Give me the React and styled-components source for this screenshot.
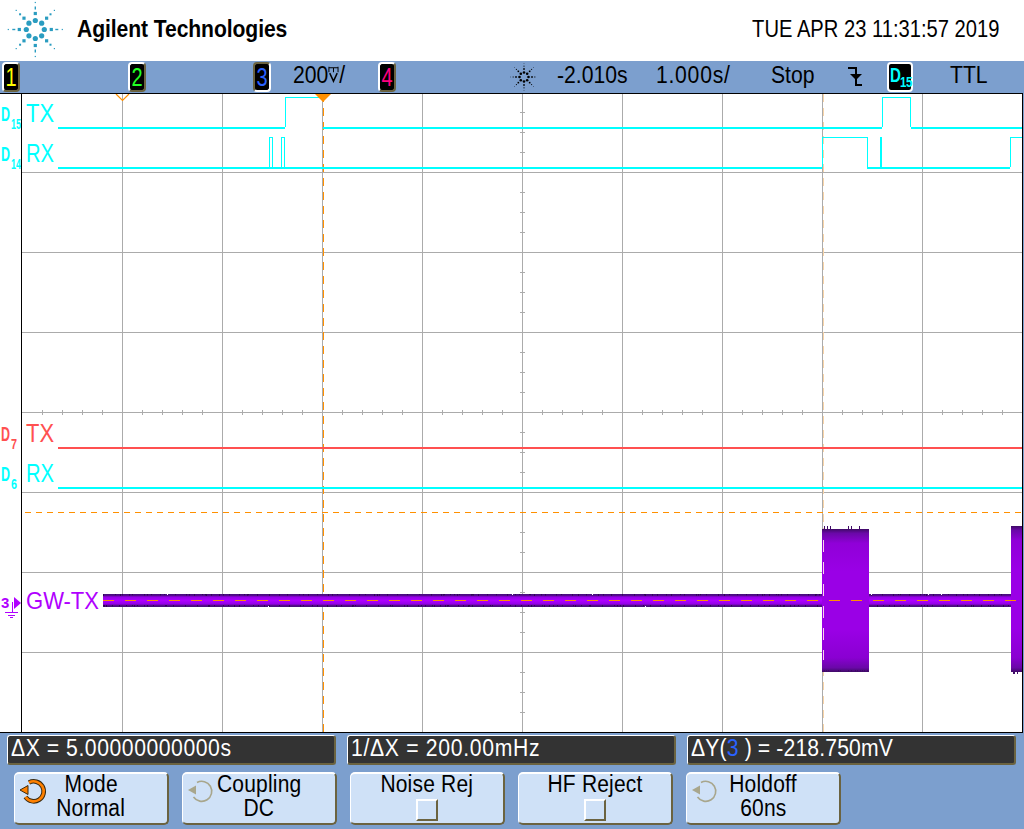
import React from "react";
import styled, { createGlobalStyle } from "styled-components";

const GlobalStyle = createGlobalStyle`
  html, body { margin: 0; padding: 0; background: #7c9fce; }
  body { font-family: "Liberation Sans", Arial, sans-serif; }
`;

const Page = styled.div`
  width: 1024px;
  height: 829px;
  display: flex;
  flex-direction: column;
  overflow: hidden;
  background: #7c9fce;
  color: #000;
`;

const Header = styled.header`
  height: 61px;
  flex: none;
  background: #fff;
  display: flex;
  align-items: center;
  padding: 0 25px 0 5px;
`;

const Brand = styled.div`
  margin: 0 0 3px 8px;
  font-size: 24px;
  font-weight: 700;
  letter-spacing: -0.1px;
  transform: scaleX(0.88);
  transform-origin: left center;
`;

const Clock = styled.div`
  margin: 0 0 3px auto;
  font-size: 24px;
  transform: scaleX(0.84);
  transform-origin: right center;
  white-space: nowrap;
`;

const StatusBar = styled.div`
  height: 32px;
  flex: none;
  display: flex;
  align-items: center;
  padding-left: 2px;
  font-size: 23px;
`;

const Slot = styled.div`
  width: ${(p) => p.$w}px;
  flex: none;
  display: flex;
  align-items: center;
`;

const Badge = styled.div`
  box-sizing: border-box;
  width: 18px;
  height: 30px;
  flex: none;
  display: flex;
  align-items: center;
  justify-content: center;
  background: #000;
  border-radius: 4px;
  border: 2px solid ${(p) => (p.$on ? "#6b6340" : "#fff")};
  border-right-color: ${(p) => (p.$on ? "#fff" : "#6b6340")};
  border-bottom-color: ${(p) => (p.$on ? "#fff" : "#6b6340")};
  color: ${(p) => p.$color};
  font-size: 25px;
`;

const Digit = styled.span`
  display: inline-block;
  transform: scaleX(0.8);
`;

const DigitalBadge = styled.div`
  box-sizing: border-box;
  width: 26px;
  height: 30px;
  flex: none;
  display: flex;
  background: #000;
  border: 2px solid #fff;
  border-radius: 4px;
  padding-left: 1px;
  color: #00ffff;
  font-weight: 700;
`;

const BadgeLetter = styled.span`
  width: 10px;
  font-size: 21px;
  line-height: 22px;
  transform: scaleX(0.72);
  transform-origin: left top;
`;

const BadgeIndex = styled.span`
  width: 11px;
  margin-top: 10px;
  font-size: 14px;
  line-height: 16px;
  letter-spacing: -0.5px;
  transform: scaleX(0.82);
  transform-origin: left top;
`;

const StatusText = styled.span`
  display: inline-block;
  white-space: nowrap;
  margin-left: ${(p) => p.$ml || 0}px;
  letter-spacing: ${(p) => p.$ls || 0}px;
  transform: translateY(-2px) scaleX(0.92);
  transform-origin: left center;
`;

const PlotFrame = styled.div`
  width: 1024px;
  height: 640px;
  flex: none;
  svg {
    display: block;
  }
`;

const Panel = styled.div`
  flex: 1;
  display: flex;
  flex-direction: column;
  gap: 7px;
  padding: 2px 0 0 7px;
`;

const ReadoutRow = styled.div`
  display: flex;
  gap: 11px;
`;

const Readout = styled.div`
  box-sizing: border-box;
  width: 329px;
  height: 30px;
  background: #333;
  color: #fff;
  border-radius: 3px;
  border: 1px solid #fff;
  border-right: 2px solid #6b6340;
  border-bottom: 2px solid #6b6340;
  padding-left: 3px;
  font-size: 23px;
  line-height: 24px;
`;

const ReadoutText = styled.span`
  display: inline-block;
  white-space: pre;
  letter-spacing: ${(p) => p.$ls}px;
  transform: scaleX(0.92);
  transform-origin: left center;
`;

const Cursor = styled.span`
  color: ${(p) => p.$color};
`;

const ButtonRow = styled.div`
  display: flex;
  gap: 13px;
  padding-left: 7px;
`;

const SoftKey = styled.div`
  position: relative;
  box-sizing: border-box;
  width: 155px;
  height: 53px;
  background: #cfe1f7;
  border-radius: 5px;
  border: 1px solid #fff;
  border-top-width: 2px;
  border-right: 2px solid #6b6340;
  border-bottom: 2px solid #6b6340;
  display: flex;
  flex-direction: column;
  align-items: center;
  font-size: 23px;
  line-height: 24px;
  letter-spacing: 0.2px;
`;

const KeyLine = styled.div`
  white-space: nowrap;
  transform: translateY(-2px) scaleX(0.913);
`;

const KeyIcon = styled.svg`
  position: absolute;
  left: 3px;
  top: 2px;
`;

const CheckBox = styled.div`
  box-sizing: border-box;
  width: 22px;
  height: 22px;
  margin-top: 1px;
  border: 2px solid #fff;
  border-right-color: #6b6340;
  border-bottom-color: #6b6340;
`;

const CYAN = "#00ffff";
const RED = "#ff5050";
const VIOLET = "#b000ff";
const ORANGE = "#ff9000";
const GRID = "#ababab";

const range = (from, to, step) => {
  const out = [];
  for (let v = from; v <= to; v += step) out.push(v);
  return out;
};

// small repeatable noise, the capture has irregular spikes along the trace
const noise = (seed) => {
  let s = seed;
  return () => {
    s = (s * 9301 + 49297) % 233280;
    return s / 233280;
  };
};

const Starburst = ({ cx, cy, color, size = 1 }) => {
  const angles = range(0, 7, 1).map((i) => (i * Math.PI) / 4);
  const ring = (r, draw) =>
    angles.map((a, i) => draw(cx + Math.sin(a) * r * size, cy - Math.cos(a) * r * size, i));
  return (
    <g fill={color}>
      {ring(9, (x, y, i) => (
        <circle key={`a${i}`} cx={x} cy={y} r={2.6 * size} />
      ))}
      {ring(16, (x, y, i) => (
        <rect key={`b${i}`} x={x - 1.6 * size} y={y - 1.6 * size} width={3.2 * size} height={3.2 * size} />
      ))}
      {ring(21.5, (x, y, i) => (
        <rect
          key={`c${i}`}
          x={x - (i % 2 ? 1 : i % 4 ? 1.5 : 0.7) * size}
          y={y - (i % 2 ? 1 : i % 4 ? 0.7 : 1.5) * size}
          width={(i % 2 ? 2 : i % 4 ? 3 : 1.4) * size}
          height={(i % 2 ? 2 : i % 4 ? 1.4 : 3) * size}
        />
      ))}
      {ring(27, (x, y, i) => (
        <rect key={`d${i}`} x={x - 0.6 * size} y={y - 0.6 * size} width={1.2 * size} height={1.2 * size} />
      ))}
    </g>
  );
};

const ARC = "M11 6.5 A10 10 0 1 1 7.5 21";

const Rotary = ({ active }) => (
  <KeyIcon width="30" height="30" viewBox="0 0 30 30" fill="none">
    {active && <path d={ARC} stroke="#3a2a10" strokeWidth="4.6" />}
    <path d={ARC} stroke={active ? "#ff8000" : "#a8a68c"} strokeWidth={active ? 2.6 : 1.6} />
    <path
      d="M2 14 L10 9.5 L10 18.5 Z"
      fill={active ? "#ff8000" : "#a8a68c"}
      stroke={active ? "#3a2a10" : "none"}
      strokeWidth="1"
    />
  </KeyIcon>
);

const Channel = ({ y, sub, label, color }) => (
  <g fill={color}>
    <text x="1" y={y} fontSize="20" fontWeight="700" textLength="9" lengthAdjust="spacingAndGlyphs">
      D
    </text>
    <text
      x="11"
      y={y + 8}
      fontSize="14"
      fontWeight="700"
      textLength={sub.length > 1 ? 10 : 6}
      lengthAdjust="spacingAndGlyphs"
    >
      {sub}
    </text>
    <text x="26" y={y + 1} fontSize="25" textLength="28" lengthAdjust="spacingAndGlyphs">
      {label}
    </text>
  </g>
);

const Spikes = ({ from, to, y, h, seed, every, color }) => {
  const rnd = noise(seed);
  const items = [];
  for (let x = from; x < to; x += 1 + Math.floor(rnd() * every)) {
    items.push(<rect key={x} x={x} y={y} width="1" height={h * (0.5 + rnd() / 2)} fill={color} />);
  }
  return <>{items}</>;
};

const Plot = () => (
  <svg width="1024" height="640" viewBox="0 93 1024 640">
    <defs>
      <linearGradient id="band" x1="0" y1="0" x2="0" y2="1">
        <stop offset="0" stopColor="#44107a" />
        <stop offset="0.14" stopColor="#5a0a92" />
        <stop offset="0.22" stopColor="#9400e6" />
        <stop offset="0.5" stopColor="#ae00ff" />
        <stop offset="0.78" stopColor="#9400e6" />
        <stop offset="0.86" stopColor="#5a0a92" />
        <stop offset="1" stopColor="#44107a" />
      </linearGradient>
      <linearGradient id="burst" x1="0" y1="0" x2="0" y2="1">
        <stop offset="0" stopColor="#3f0a66" />
        <stop offset="0.03" stopColor="#6a08a8" />
        <stop offset="0.1" stopColor="#9000d8" />
        <stop offset="0.3" stopColor="#9a00e6" />
        <stop offset="0.7" stopColor="#9a00e6" />
        <stop offset="0.9" stopColor="#8a00d2" />
        <stop offset="0.97" stopColor="#6a08a8" />
        <stop offset="1" stopColor="#3f0a66" />
      </linearGradient>
    </defs>

    <rect x="0" y="93" width="1023" height="640" fill="#fff" />

    {/* graticule */}
    <g stroke={GRID} strokeWidth="1" shapeRendering="crispEdges">
      {range(122, 922, 100).map((x) => (
        <line key={x} x1={x + 0.5} y1="94" x2={x + 0.5} y2="732" />
      ))}
      {range(172, 652, 80).map((y) => (
        <line key={y} x1="22" y1={y + 0.5} x2="1022" y2={y + 0.5} />
      ))}
      {range(42, 1002, 20).map((x) => (
        <line key={x} x1={x + 0.5} y1="410" x2={x + 0.5} y2="415" />
      ))}
      {range(112, 712, 20).map((y) => (
        <line key={y} x1="520" y1={y + 0.5} x2="525" y2={y + 0.5} />
      ))}
    </g>

    {/* cursors */}
    <line x1="323.5" y1="94" x2="323.5" y2="732" stroke={ORANGE} strokeDasharray="8 6" shapeRendering="crispEdges" />
    <line x1="823.5" y1="94" x2="823.5" y2="732" stroke="#f8d4a8" strokeDasharray="8 6" shapeRendering="crispEdges" />
    <line x1="25" y1="512.5" x2="1022" y2="512.5" stroke={ORANGE} strokeDasharray="6 5" shapeRendering="crispEdges" />

    {/* digital traces */}
    <g fill="none" shapeRendering="crispEdges">
      <path d="M58 128 H285 M323 128 H882 M911 128 H1022" stroke={CYAN} strokeWidth="2" />
      <path d="M285.5 127 V97.5 H323 M882.5 127 V97.5 H910.5 V127" stroke={CYAN} strokeWidth="1" />
      <path d="M58 168 H822 M867 168 H1010" stroke={CYAN} strokeWidth="2" />
      <path
        d="M269.5 167 V137.5 H272.5 V167 M281.5 167 V137.5 H284.5 V167 M822.5 167 V137.5 H867.5 V167 M1010.5 167 V137.5 H1022"
        stroke={CYAN}
        strokeWidth="1"
      />
      <path d="M880.5 168 V137" stroke={CYAN} strokeWidth="2" />
      <path d="M58 448 H1022" stroke={RED} strokeWidth="2" />
      <path d="M58 488 H1022" stroke={CYAN} strokeWidth="2" />
    </g>

    {/* analog trace */}
    <rect x="103" y="594" width="919" height="13" fill="url(#band)" />
    <Spikes from={103} to={1022} y={594} h={2} seed={17} every={12} color="#2e0a52" />
    <Spikes from={103} to={1022} y={605} h={2} seed={53} every={12} color="#2e0a52" />
    <g fill="#fff">
      <rect x="167" y="593" width="1" height="2" />
      <rect x="268" y="606" width="1" height="2" />
      <rect x="512" y="593" width="1" height="2" />
      <rect x="592" y="593" width="1" height="2" />
      <rect x="645" y="606" width="1" height="2" />
      <rect x="871" y="593" width="1" height="2" />
      <rect x="928" y="593" width="1" height="2" />
      <rect x="941" y="593" width="1" height="2" />
    </g>
    <rect x="822" y="529" width="47" height="143" fill="url(#burst)" />
    <rect x="1011" y="526" width="11" height="146" fill="url(#burst)" />
    <g fill="#3f0a66">
      {[824, 827, 830, 848, 851, 859].map((x) => (
        <rect key={x} x={x} y="526" width="1" height="3" />
      ))}
      {[824, 826, 828, 838, 840, 848, 851, 855, 857, 860, 862, 864, 867].map((x) => (
        <rect key={x} x={x} y="670" width="1" height="2" />
      ))}
      <rect x="1013" y="672" width="2" height="2" />
      <rect x="1017" y="672" width="1" height="2" />
    </g>
    <line x1="103" y1="600.5" x2="1022" y2="600.5" stroke={ORANGE} strokeDasharray="11 11" shapeRendering="crispEdges" />
    <line x1="823.5" y1="540" x2="823.5" y2="660" stroke="#f8d4e8" strokeDasharray="12 10" shapeRendering="crispEdges" />

    {/* markers */}
    <path d="M116 94 L122.5 100.5 L129 94" fill="none" stroke={ORANGE} strokeWidth="1.2" />
    <path d="M315 94 H331 L323 102 Z" fill={ORANGE} />

    {/* labels */}
    <Channel y={121} sub="15" label="TX" color={CYAN} />
    <Channel y={161} sub="14" label="RX" color={CYAN} />
    <Channel y={441} sub="7" label="TX" color={RED} />
    <Channel y={481} sub="6" label="RX" color={CYAN} />
    <text x="26" y="609" fontSize="24" fill={VIOLET} textLength="73" lengthAdjust="spacingAndGlyphs">
      GW-TX
    </text>
    <text x="1" y="608" fontSize="15" fontWeight="700" fill={VIOLET}>
      3
    </text>
    <path d="M14 597 L21 603 L14 609 Z" fill={VIOLET} />
    <path
      d="M12.5 602 V612 M5 612.5 H18 M8 615.5 H15 M10 617.5 H13"
      stroke={VIOLET}
      strokeWidth="1"
      fill="none"
      shapeRendering="crispEdges"
    />

    {/* frame */}
    <g stroke="#000" strokeWidth="1" shapeRendering="crispEdges">
      <line x1="0" y1="93.5" x2="1023" y2="93.5" />
      <line x1="21.5" y1="93" x2="21.5" y2="733" />
      <line x1="0" y1="732.5" x2="1023" y2="732.5" />
      <line x1="1022.5" y1="93" x2="1022.5" y2="733" />
    </g>
  </svg>
);

export default function App() {
  return (
    <Page>
      <GlobalStyle />
      <Header>
        <svg width="64" height="60" viewBox="5 0 64 60">
          <Starburst cx={35.3} cy={28.5} color="#2a9cc0" />
        </svg>
        <Brand>Agilent Technologies</Brand>
        <Clock>TUE APR 23 11:31:57 2019</Clock>
      </Header>
      <StatusBar>
        <Slot $w={126}>
          <Badge $color="#ffff00">
            <Digit>1</Digit>
          </Badge>
        </Slot>
        <Slot $w={125}>
          <Badge $color="#22ff22">
            <Digit>2</Digit>
          </Badge>
        </Slot>
        <Slot $w={125}>
          <Badge $on $color="#2a62ff">
            <Digit>3</Digit>
          </Badge>
          <StatusText $ml={22}>
            200
            <svg width="12" height="18" viewBox="0 0 13 20" fill="none" stroke="#000" strokeWidth="1.2">
              <path d="M1 8 V2 M1 3 H12 M6.5 3 V8 M12 2 V8" />
              <path d="M2 9 L6.5 18 L11 9" strokeWidth="1.8" />
            </svg>
            /
          </StatusText>
        </Slot>
        <Slot $w={129}>
          <Badge $color="#ff0080">
            <Digit>4</Digit>
          </Badge>
        </Slot>
        <Slot $w={50}>
          <svg width="30" height="30" viewBox="505 62 30 30">
            <Starburst cx={522} cy={77} color="#000" size={0.5} />
          </svg>
        </Slot>
        <Slot $w={99}>
          <StatusText>-2.010s</StatusText>
        </Slot>
        <Slot $w={115}>
          <StatusText $ls={0.8}>1.000s/</StatusText>
        </Slot>
        <Slot $w={76}>
          <StatusText>Stop</StatusText>
        </Slot>
        <Slot $w={40}>
          <svg width="16" height="22" viewBox="0 0 16 22" fill="none" stroke="#000" strokeWidth="2">
            <path d="M1 2 H9 V19 H15" />
            <path d="M3 8 H15 L9 14 Z" fill="#000" stroke="none" />
          </svg>
        </Slot>
        <Slot $w={63}>
          <DigitalBadge>
            <BadgeLetter>D</BadgeLetter>
            <BadgeIndex>15</BadgeIndex>
          </DigitalBadge>
        </Slot>
        <StatusText>TTL</StatusText>
      </StatusBar>
      <PlotFrame>
        <Plot />
      </PlotFrame>
      <Panel>
        <ReadoutRow>
          <Readout>
            <ReadoutText $ls={0.6}>ΔX = 5.00000000000s</ReadoutText>
          </Readout>
          <Readout>
            <ReadoutText $ls={0.75}>1/ΔX = 200.00mHz</ReadoutText>
          </Readout>
          <Readout>
            <ReadoutText $ls={0.15}>
              ΔY(<Cursor $color="#2a62ff">3</Cursor> ) = -218.750mV
            </ReadoutText>
          </Readout>
        </ReadoutRow>
        <ButtonRow>
          <SoftKey>
            <Rotary active />
            <KeyLine>Mode</KeyLine>
            <KeyLine>Normal</KeyLine>
          </SoftKey>
          <SoftKey>
            <Rotary />
            <KeyLine>Coupling</KeyLine>
            <KeyLine>DC</KeyLine>
          </SoftKey>
          <SoftKey>
            <KeyLine>Noise Rej</KeyLine>
            <CheckBox />
          </SoftKey>
          <SoftKey>
            <KeyLine>HF Reject</KeyLine>
            <CheckBox />
          </SoftKey>
          <SoftKey>
            <Rotary />
            <KeyLine>Holdoff</KeyLine>
            <KeyLine>60ns</KeyLine>
          </SoftKey>
        </ButtonRow>
      </Panel>
    </Page>
  );
}
